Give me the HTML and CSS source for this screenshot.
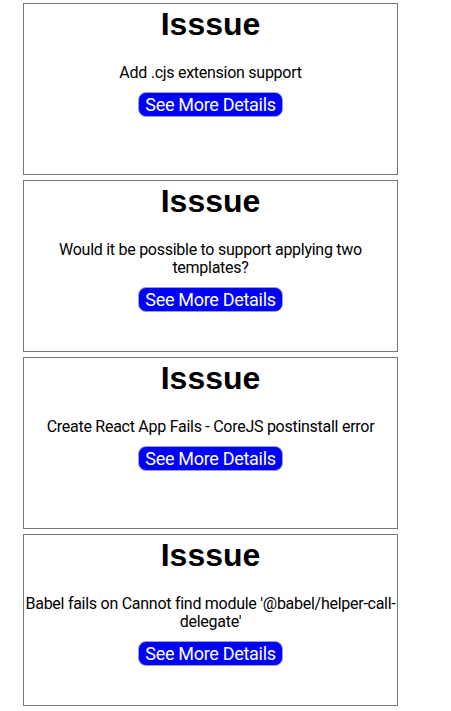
FILE: index.html
```html
<!DOCTYPE html>
<html>
<head>
<meta charset="utf-8">
<link rel="stylesheet" href="styles.css">
</head>
<body>
<div class="list">
  <div class="card">
    <h1 class="title">Isssue</h1>
    <p class="desc">Add .cjs extension support</p>
    <button class="more">See More Details</button>
  </div>
  <div class="card">
    <h1 class="title">Isssue</h1>
    <p class="desc">Would it be possible to support applying two templates?</p>
    <button class="more">See More Details</button>
  </div>
  <div class="card">
    <h1 class="title">Isssue</h1>
    <p class="desc">Create React App Fails - CoreJS postinstall error</p>
    <button class="more">See More Details</button>
  </div>
  <div class="card">
    <h1 class="title">Isssue</h1>
    <p class="desc">Babel fails on Cannot find module '@babel/helper-call-delegate'</p>
    <button class="more">See More Details</button>
  </div>
</div>
</body>
</html>
```

FILE: styles.css
```css
html, body {
  margin: 0;
  padding: 0;
  background: #fff;
}
.list {
  display: flex;
  flex-direction: column;
  gap: 5px;
  padding: 3px 0 0 23px;
}
.card {
  box-sizing: border-box;
  width: 375px;
  height: 172px;
  border: 1px solid #767676;
  display: flex;
  flex-direction: column;
  align-items: center;
  text-align: center;
  font-family: Roboto, "Noto Sans", sans-serif;
  color: #000;
}
.title {
  font-family: "Liberation Sans", Arial, sans-serif;
  font-weight: bold;
  font-size: 32px;
  line-height: 37px;
  margin: 2px 0 0 0;
}
.desc {
  font-size: 16px;
  line-height: 18px;
  letter-spacing: -0.27px;
  margin: 21px 0 10px 0;
}
.more {
  font-family: Roboto, "Noto Sans", sans-serif;
  font-size: 18px;
  line-height: 21px;
  letter-spacing: -0.3px;
  color: #fff;
  background: #0000ff;
  border: 1px solid #a0a0c0;
  border-radius: 8px;
  padding: 1px 6px;
  margin: 0;
}
```
